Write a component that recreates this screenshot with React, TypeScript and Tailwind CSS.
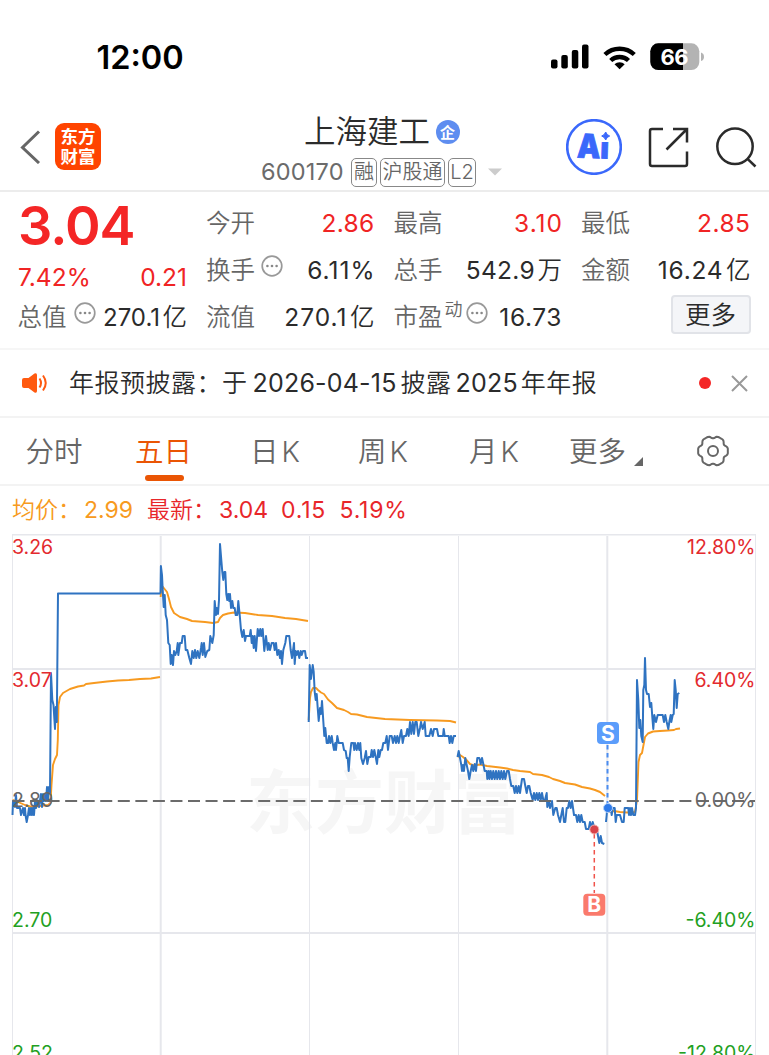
import React from 'react';

const TABS = [
  { label: '分时', className: 'w-[109px] pl-[25.5px]' },
  { label: '五日', className: 'w-[115px] pl-[26px] text-[#ea5504]', active: true },
  { label: '日', suffix: 'K', className: 'w-[108px] pl-[26px]' },
  { label: '周', suffix: 'K', className: 'w-[111px] pl-[26px]' },
  { label: '月', suffix: 'K', className: 'w-[100px] pl-[26px]' },
];

const PRICE_LINES = [
  // day 1
  '12.5,815 13,801 15,807 16,795 17,808 20,808 21,815 23,808 24,815 25,808 25.5,815 26.7,822 28,815 29,808 30,815 31,808 32,815 33,808 34,815 35,801 36,808 37,801 39,807 41,794 42,807 43,794 44,801 45,794 46,801 47,787 48,801 49,787 50,793 51,673 52.3,700 53.5,705 55,729 55.8,707 56.8,722 58,593.5 160.5,593.5',
  // day 2
  '160.5,593.5 160.9,566 162,575 162.7,590 163.7,607 164.7,595 165.7,615 167,620 168.3,643 169.7,645 170.7,664 171.7,655 173,665 174,651 175.3,655 176.7,651 177.7,643 178.3,655 180,643 181.7,643 182.7,636 184.7,636 185.7,650 187.3,650 189.3,658 191,664 192.3,651 193.7,658 195,650 196.3,658 197.7,651 199.3,658 201,648 201.7,643 202.7,655 204,643 205.3,657 207.3,651 209.3,650 210.3,636 212.3,643 213.7,635 214.7,601 216,615 216.7,608 218,614 219,600 220,544 221.3,560 222.3,572 223.3,580 224.3,572 225.3,572 226.3,594 227.3,600 228.3,594 229.3,601 230,594 231,608 232.3,601 233.3,608 234.7,608 235.7,615 237.3,615 238.3,601 239.7,615 241,630 242.3,637 243.7,630 245,641 246,636 249.7,636 250.7,630 251.7,643 252.7,636 253.7,648 254.7,636 256,651 257.7,629 259,636 260.3,629 261.3,636 262.7,629 264.3,651 266,636 267.7,650 268.7,643 270,650 271.7,643 273.7,643 274.7,650 276,643 277.3,655 278.7,650 280,658 281,651 282,664 283.3,650 285.3,643 286.3,636 289.3,636 290.7,650 292,658 293,651 294,643 294.7,664 295.7,651 296.7,655 298,651 299.3,658 300.7,651 301.7,655 303,651 305,651 306,658 308,658',
  // day 3
  '308.7,722 309.7,665 311,679 312.7,665 313.7,672 314.7,692 315.7,700 316.7,694 317.7,708 318.7,721 320,708 321,714 322,701 323.3,721 324.3,736 325.3,728 326.7,743 328,743 329,736 330.3,743 331.7,736 332.7,743 334,750 335.3,743 336,750 337.3,736 338.7,743 342.7,743 344,750 345.7,751 346.7,758 347.7,758 348.7,771 349.7,757 351.3,743 353.3,743 354.3,750 355,743 356.7,750 358,743 359.3,750 360.3,743 361.3,758 363,764 364.7,758 366,751 367.3,764 368.7,757 370.7,757 371.7,750 373,757 374.3,750 375.7,757 377,764 378.3,750 379.3,757 380.7,750 382,750 383.3,743 385.3,743 386.7,736 388,750 389.7,736 391.7,736 393,743 394.7,736 396,743 397.3,736 398.7,743 400,736 401.3,730 402.7,743 404,736 406,736 407.3,729 408.7,736 410,722 411.3,734 412.7,722 414,734 415.3,722 416.7,722 418.3,736 420,728 421,722 422.7,729 424.7,722 425.7,736 429.3,736 431,729 432.7,736 434,729 437,729 438.3,736 443,736 443.7,729 444.7,736 448.7,736 449.7,743 451,736 452.3,743 453.7,736 456,736',
  // day 4
  '457.5,757 458.7,751 460,758 461.3,765 462,771 463,765 464,771 465.3,758 466.7,765 468,771 469.3,779 470.7,771 472,765 473.3,771 474.7,764 476,771 477.3,758 479.3,758 480.7,764 482,758 483.3,764 484.7,771 486.7,771 487.3,779 488.7,771 489.5,779 490.7,771 492,779 493.3,771 494.7,779 496,771 497.3,779 498.7,771 500,779 501.3,771 502.7,779 504,771 505.3,779 507,771 508.7,771 510,779 511.3,786 513.3,786 514.7,793 516,786 517.3,793 518.7,786 520,793 522,779 524,779 525.3,786 526.7,793 528,786 529.3,786 530.7,793 532.7,800 534,793 535.3,800 536.7,793 538,800 539.3,793 540.7,800 542,793 543.3,800 545,800 546.7,793 547.3,807 548.7,801 550,808 552,801 553.3,815 555.3,808 556.7,808 558,815 560,822 561.3,815 562.7,808 564,822 565.3,822 566.7,808 568,808 569.3,801 570.7,808 572,801 574,815 576,815 577.3,822 578.7,815 580,822 581.3,815 582.7,822 584.7,822 586,829 588.7,829 590,822 591.3,829 592.7,822 594.7,829 596.7,829 598,836 599.3,843 600.7,836 602,843 604.3,844',
  // day 5
  '606,822 606.7,815 607.3,806 608.7,808 610.7,808 611.7,815 612.7,808 614.7,808 615.7,822 616.7,815 620,815 622,822 623.7,822 624.7,808 628.3,808 629,815 630,808 631,815 632,808 633.3,815 635,815 636,808 637,680 638.3,700 639.3,728 640.3,720 641.3,736 642.7,742 643.3,690 644.3,685 645,658 646,690 647,694 648.7,694 650,707 651.3,703 652.3,717 653.3,729 654.3,715 656,722 657.7,715 662.7,715 664,722 665.3,715 666.7,722 668.3,729 669.3,722 670.7,715 671.3,722 672.7,715 673.7,714 674.7,680 675.7,690 676.7,708 677.7,694 679.3,693',
];

const AVERAGE_LINES = [
  '12.5,800 18,802 25,805 32,807 40,806 48,805 50.5,803 51.5,785 53,765 55,759 57,755 57.8,740 58.5,705 60,697 63,693 70,689 78,686.5 84,685.5 86,684 94,683 107,681.5 118,680.5 129,680 140,679 151,678.5 160,677',
  '160.7,597 161,592 163,587 167,592 169,599 171,607 174,613 180,617 187,619 192,621 205,622 213,623 218,622 220,618 223,615 228,613.5 234,612.5 245,613 258,615 272,616 285,618 296,619 308,621',
  '308.7,720 310,698 311,692 313,688 316,688 318,690 321,692.5 324,694 328,699.5 332,703 337,708 344,710 348,712 351,714 357,714.5 367,717 385,719 410,720 437,720.5 450,721 456,722.5',
  '457.5,757 460,755 463,757 466,759.5 470,764 474,765.5 480,764.5 487,766 500,767.5 507,768.5 513,770 520,771 530,772 533,774 542,775 549,777 553,779 560,781 565,783 575,784.5 582,787 590,788.5 595,790 600,792 605,796',
  '608,812 614,811 620,812 627,812.5 635,812 637,800 638.5,762 640,755 642,753 643.5,745 645,737 648,733.5 653,731.5 660,731 668,730.5 674,730 676,729 680,728.5',
];

// six soft lobes around the centre, flat on top with narrow valleys
const GEAR_POINTS = Array.from({ length: 72 }, (_, i) => {
  const a = (i * Math.PI) / 36;
  const r = 14.2 + 1.1 * Math.cos(6 * a) - 0.5 * Math.cos(12 * a);
  return `${(16 + r * Math.cos(a)).toFixed(2)},${(16 + r * Math.sin(a)).toFixed(2)}`;
}).join(' ');

const InfoDots: React.FC<{ className?: string }> = ({ className }) => (
  <svg className={className} width="22" height="22" viewBox="0 0 22 22" fill="none">
    <circle cx="11" cy="11" r="9.8" stroke="#999" strokeWidth="1.7" />
    <circle cx="6.4" cy="11" r="1.3" fill="#888" />
    <circle cx="11" cy="11" r="1.3" fill="#888" />
    <circle cx="15.6" cy="11" r="1.3" fill="#888" />
  </svg>
);

interface StatProps {
  label: React.ReactNode;
  value: string;
  unit?: string;
  red?: boolean;
  valueClass?: string;
}

const Stat: React.FC<StatProps> = ({ label, value, unit, red, valueClass = 'tracking-[0.3px]' }) => (
  <div className="flex h-[47px] items-center justify-between leading-[47px] whitespace-nowrap">
    <span className="-ml-[0.5px] flex items-center font-[350] text-[#666]">{label}</span>
    <span className={red ? 'text-[#f02424]' : 'text-[#2b2b2b]'}>
      <span className={valueClass}>{value}</span>
      {unit && <span className="ml-[2.5px] font-[350]">{unit}</span>}
    </span>
  </div>
);

const StatusBar = () => (
  <div className="flex h-[100px] items-start justify-between pt-[40px] pr-[65px] pl-[96.5px]">
    <span className="text-[32.5px] leading-[36px] font-semibold text-black">12:00</span>
    <svg width="154" height="28" viewBox="550 43 154 28" className="mt-[3px]">
      <rect x="551" y="59.5" width="6.5" height="9" rx="2" />
      <rect x="561.3" y="55" width="6.5" height="13.5" rx="2" />
      <rect x="571.8" y="50" width="6.5" height="18.5" rx="2" />
      <rect x="582" y="44.5" width="6.5" height="24" rx="2" />
      <g fill="none" stroke="#000" strokeWidth="4.4">
        <path d="M604.9 54.5 A21.5 21.5 0 0 1 634.3 54.5" />
        <path d="M610.7 60.5 A13 13 0 0 1 628.5 60.5" />
      </g>
      <path d="M614.5 64.3 A7.5 7.5 0 0 1 624.7 64.3 L619.6 69.2 Z" />
      <clipPath id="battery">
        <rect x="650.3" y="43.3" width="49" height="26.7" rx="8" />
      </clipPath>
      <g clipPath="url(#battery)">
        <rect x="650" y="43" width="50" height="28" fill="#b3b3b3" />
        <rect x="650" y="43" width="33" height="28" />
      </g>
      <path d="M701 52.5 Q704 53.5 704 56.7 Q704 60 701 61 Z" fill="#b3b3b3" />
      <text x="674.3" y="64.5" textAnchor="middle" fontSize="22" fontWeight="700" letterSpacing="-0.4" fill="#fff">66</text>
    </svg>
  </div>
);

const Tag: React.FC<{ children: React.ReactNode; className: string }> = ({ children, className }) => (
  <span
    className={`flex h-[29px] items-center justify-center rounded-[5px] border border-[#888] text-[20px] leading-[27px] font-[350] whitespace-nowrap text-[#666] ${className}`}
  >
    {children}
  </span>
);

const Header = () => (
  <header className="flex h-[92px] items-start border-b-2 border-[#ececec]">
    <div className="flex w-[261px] items-center pt-[23px] pl-[20px]">
      <svg width="22" height="34" viewBox="0 0 22 34" fill="none" stroke="#666" strokeWidth="3">
        <path d="M19 1.5 L2.5 17.5 L19 33" />
      </svg>
      <div className="ml-[13px] flex h-[47px] w-[46px] flex-col items-center justify-center rounded-[9px] bg-[#ff4400] text-[17.5px] leading-[20px] font-bold text-white">
        <span>东方</span>
        <span>财富</span>
      </div>
    </div>
    <div className="flex w-[305px] flex-col pt-[13px]">
      <div className="flex h-[38px] items-center pl-[43px]">
        <span className="text-[31.5px] leading-[38px] font-[350] text-[#2b2b2b]">上海建工</span>
        <span className="ml-[5.5px] flex size-[24px] items-center justify-center rounded-full bg-[#5e8df0] text-[15px] leading-none font-bold text-white">
          企
        </span>
      </div>
      <div className="mt-[6px] flex h-[30px] items-center">
        <span className="w-[90px] text-[23.5px] leading-[30px] tracking-[0.2px] text-[#6b6b6b]">600170</span>
        <Tag className="w-[26px]">融</Tag>
        <Tag className="ml-[3px] w-[65px]">沪股通</Tag>
        <Tag className="ml-[3px] w-[28px]">L2</Tag>
        <svg className="ml-[12px]" width="14" height="8" viewBox="0 0 14 8">
          <path d="M0 0.5 H14 L7 7.5 Z" fill="#ccc" />
        </svg>
      </div>
    </div>
    <div className="flex items-center pt-[19px]">
      <svg width="56" height="56" viewBox="0 0 56 56">
        <circle cx="28" cy="28" r="26.8" fill="#fff" stroke="#3a68fb" strokeWidth="2.6" />
        <text
          x="11"
          y="39"
          fontSize="33"
          fontWeight="900"
          fill="#3a68fb"
          stroke="#3a68fb"
          strokeWidth="0.8"
          textLength="32"
          lengthAdjust="spacingAndGlyphs"
          transform="rotate(2 28 28)"
        >
          Ai
        </text>
        <rect x="33.5" y="10" width="13" height="13" fill="#fff" />
        <path d="M39.7 13 Q40.7 16 43.7 17 Q40.7 18 39.7 21 Q38.7 18 35.7 17 Q38.7 16 39.7 13 Z" fill="#3a68fb" stroke="#3a68fb" />
      </svg>
      <svg className="mt-[1px] ml-[26px]" width="42" height="42" viewBox="0 0 42 42" fill="none" stroke="#2b2b2b" strokeWidth="2.5">
        <path d="M15 2 H4 Q2 2 2 4 V37 Q2 39 4 39 H37 Q39 39 39 37 V24.5 M25 2 H39 V15.5 M39 2 L18.5 22.5" />
      </svg>
      <svg className="mt-[1px] ml-[26px]" width="42" height="42" viewBox="0 0 42 42" fill="none" stroke="#2b2b2b" strokeWidth="2.5">
        <circle cx="19" cy="19.3" r="17.7" />
        <path d="M31.5 31.8 L39.5 39.5" />
      </svg>
    </div>
  </header>
);

const Quote = () => (
  <section className="grid h-[158px] grid-cols-[169px_168px_168px_169px] gap-x-[19.5px] border-b-2 border-[#f6f6f6] pt-[8px] pl-[18px] text-[24.5px]">
    <div>
      <div className="h-[56px] text-[54px] leading-[52px] font-semibold tracking-[-1px] text-[#f42626]">3.04</div>
      <div className="flex h-[38px] justify-between pt-[2px] leading-[38px] text-[#f02424]">
        <span>7.42%</span>
        <span>0.21</span>
      </div>
      <Stat label={<>总值<InfoDots className="mb-[10px] ml-[7px]" /></>} value="270.1" unit="亿" valueClass="text-[24px]" />
    </div>
    <div>
      <Stat label="今开" value="2.86" red />
      <Stat label={<>换手<InfoDots className="mb-[10px] ml-[6px]" /></>} value="6.11%" valueClass="tracking-[1px] -mr-px" />
      <Stat label="流值" value="270.1" unit="亿" valueClass="tracking-[1px]" />
    </div>
    <div>
      <Stat label="最高" value="3.10" red valueClass="tracking-[1px] -mr-px" />
      <Stat label="总手" value="542.9" unit="万" />
      <Stat
        label={
          <>
            市盈
            <span className="mb-[15px] ml-[2px] text-[18px] leading-[24px]">动</span>
            <InfoDots className="mb-[10px] ml-[3px]" />
          </>
        }
        value="16.73"
        valueClass="tracking-[0.6px]"
      />
    </div>
    <div>
      <Stat label="最低" value="2.85" red valueClass="tracking-[0.5px]" />
      <Stat label="金额" value="16.24" unit="亿" valueClass="tracking-[0.8px]" />
      <div className="flex justify-end pt-[1px]">
        <button className="h-[39px] w-[80px] rounded-[4px] border-2 border-[#e1e3e8] bg-[#f4f5f8] text-[25.5px] leading-[34px] font-[350] text-[#2b2b2b]">
          更多
        </button>
      </div>
    </div>
  </section>
);

const Notice = () => (
  <div className="flex h-[68px] items-center border-b-2 border-[#f3f3f3] pl-[21px]">
    <svg width="28" height="22" viewBox="0 0 28 22" fill="none">
      <path d="M3 6 H7.5 L13.5 1.5 Q16 .5 16 3 V19 Q16 21.5 13.5 20.5 L7.5 16 H3 Q1 16 1 14 V8 Q1 6 3 6 Z" fill="#ff5a10" />
      <path d="M18.5 6.5 Q21.5 11 18.5 15.5 M22 3.5 Q27.5 11 22 18.5" stroke="#ff5a10" strokeWidth="2" />
    </svg>
    <p className="ml-[20px] w-[627px] text-[25px] leading-[40px] font-[350] tracking-[0.5px] whitespace-nowrap text-[#2b2b2b]">
      年报预披露：于<span className="mr-[4px] ml-[5px] font-normal tracking-[0.2px]">2026-04-15</span>披露
      <span className="mr-[3px] ml-[4px] font-normal tracking-[0.2px]">2025</span>年年报
    </p>
    <span className="ml-[3px] size-[12px] rounded-full bg-[#f42626]" />
    <svg className="ml-[20px]" width="17" height="17" viewBox="0 0 17 17" stroke="#999" strokeWidth="2">
      <path d="M1 1 L16 16 M16 1 L1 16" />
    </svg>
  </div>
);

const Tabs = () => (
  <nav className="flex h-[68px] items-start border-b-2 border-[#f3f3f3] text-[28.5px] leading-[67px] font-[350] text-[#666]">
    {TABS.map((tab) => (
      <div key={tab.label} className={`relative whitespace-nowrap ${tab.className}`}>
        {tab.label}
        {tab.suffix && <span className="ml-[3px]">{tab.suffix}</span>}
        {tab.active && <span className="absolute top-[57px] left-[36px] h-[6px] w-[39px] rounded-full bg-[#ea5504]" />}
      </div>
    ))}
    <div className="flex w-[154px] pl-[26px]">
      更多
      <svg className="mt-[39px] ml-[8px]" width="9" height="9" viewBox="0 0 9 9">
        <path d="M9 0 V9 H0 Z" fill="#666" />
      </svg>
    </div>
    <svg className="mt-[17px]" width="32" height="32" viewBox="0 0 32 32" fill="none" stroke="#666" strokeWidth="2">
      <polygon points={GEAR_POINTS} strokeLinejoin="round" />
      <circle cx="16" cy="16" r="5" />
    </svg>
  </nav>
);

const Chart = () => (
  <svg className="block" width="769" height="521" viewBox="0 534 769 521" fill="none">
    <text x="384" y="828" textAnchor="middle" fontSize="69" fontWeight="700" fill="#f6f6f6">东方财富</text>

    <g stroke="#e6e7ec">
      <path d="M12 534.7 H756" strokeWidth="1.5" />
      <path d="M12 669 H756 M12 933 H756" strokeWidth="2" />
      <path d="M12.5 534 V1055 M309.5 536 V1055 M458.5 536 V1055 M755.5 534 V1055" />
      <path d="M160.7 536 V1055 M607.3 536 V1055" strokeWidth="2" />
    </g>

    {AVERAGE_LINES.map((points) => (
      <polyline key={points} points={points} stroke="#f79a20" strokeWidth="1.9" strokeLinejoin="round" />
    ))}
    {PRICE_LINES.map((points) => (
      <polyline key={points} points={points} stroke="#2f73c1" strokeWidth="2" strokeLinejoin="round" />
    ))}
    <path d="M12.5 801 H755" stroke="#6b6b6b" strokeWidth="2" strokeDasharray="12 5.55" />

    {/* sell marker */}
    <path d="M607.5 745 V804" stroke="#4a8cf0" strokeWidth="2" strokeDasharray="4.5 3.5" />
    <circle cx="608" cy="808" r="4.5" fill="#2f7bea" stroke="#b5d2fa" />
    <rect x="597" y="722" width="22" height="22" rx="4" fill="#5b9dfb" />
    <text x="608" y="740.5" textAnchor="middle" fontSize="21" fontWeight="700" fill="#fff">S</text>

    {/* buy marker */}
    <path d="M594.3 834 V893" stroke="#f0524a" strokeWidth="1.5" strokeDasharray="4.5 3.5" />
    <circle cx="594.3" cy="829.5" r="4.5" fill="#d8434a" stroke="#f5b5b0" />
    <rect x="583.3" y="893.7" width="22" height="22" rx="4" fill="#fa7a6c" />
    <text x="594.3" y="912.3" textAnchor="middle" fontSize="21" fontWeight="700" fill="#fff">B</text>

    <g fontSize="19.5" fill="#e32a2e">
      <text x="12" y="554">3.26</text>
      <text x="12" y="687">3.07</text>
      <text x="12" y="807" fill="#666">2.89</text>
      <text x="12" y="927" fill="#22a022">2.70</text>
      <text x="12" y="1059.5" fill="#22a022">2.52</text>
    </g>
    <g fontSize="19.5" fill="#e32a2e" textAnchor="end">
      <text x="755.5" y="554">12.80%</text>
      <text x="755.5" y="687">6.40%</text>
      <text x="755.5" y="807" fill="#666">0.00%</text>
      <text x="755.5" y="927" fill="#22a022">-6.40%</text>
      <text x="755.5" y="1059.5" fill="#22a022">-12.80%</text>
    </g>
  </svg>
);

export default function App() {
  return (
    <div className="h-[1055px] w-[769px] overflow-hidden bg-white font-['Inter','Noto_Sans_CJK_SC',sans-serif]">
      <StatusBar />
      <Header />
      <Quote />
      <Notice />
      <Tabs />
      <div className="flex h-[48px] items-center pl-[12px] text-[23px] leading-[49px] whitespace-nowrap">
        <span className="w-[72px] font-[350] text-[#f79a20]">均价：</span>
        <span className="w-[63px] text-[#f79a20]">2.99</span>
        <span className="w-[72px] font-[350] text-[#e8262a]">最新：</span>
        <span className="w-[62px] text-[#e8262a]">3.04</span>
        <span className="w-[58.5px] tracking-[0.8px] text-[#e8262a]">0.15</span>
        <span className="tracking-[0.8px] text-[#e8262a]">5.19%</span>
      </div>
      <Chart />
    </div>
  );
}
